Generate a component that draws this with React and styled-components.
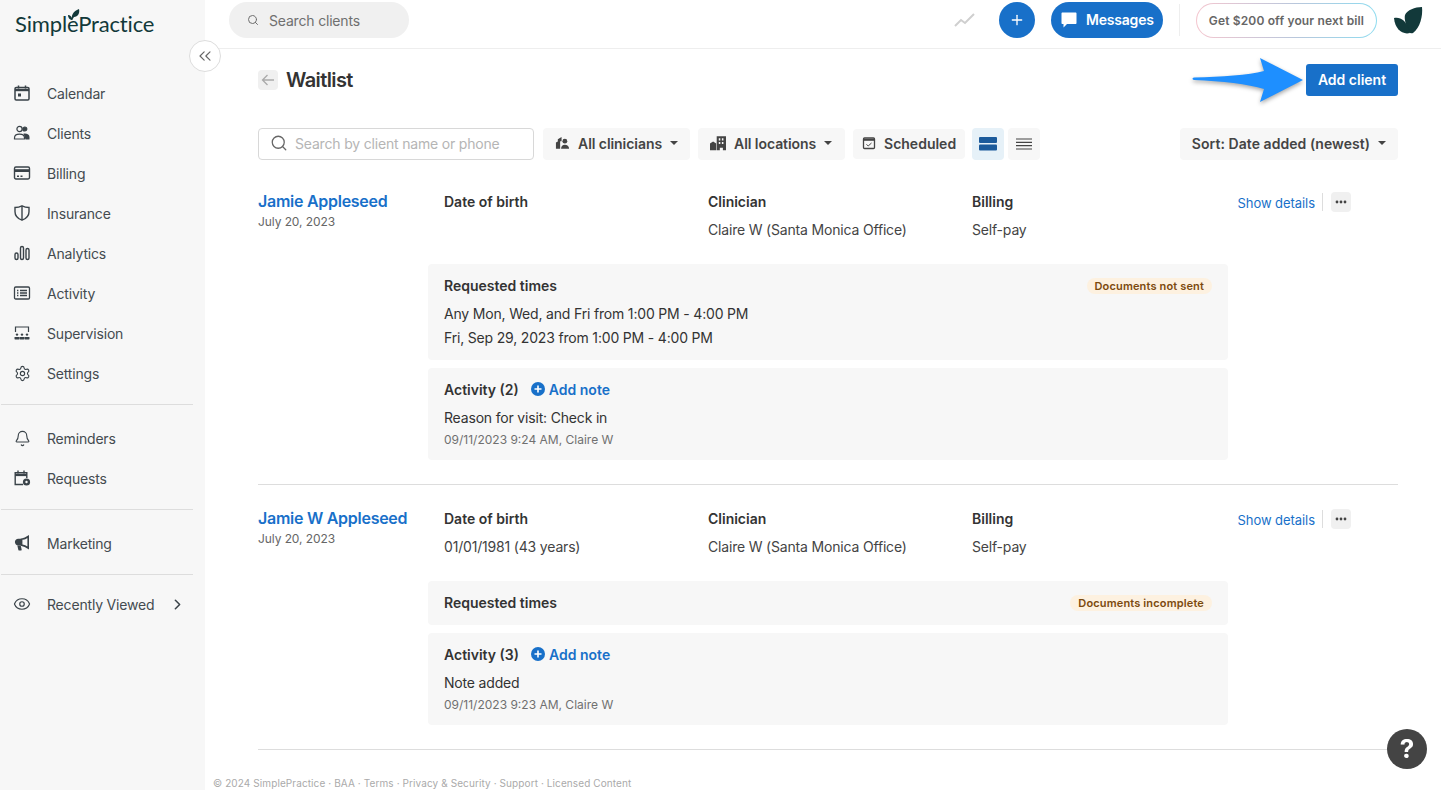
import React from 'react';
import styled, { createGlobalStyle } from 'styled-components';
import { ChevronsLeft, ChevronRight, Search, Plus, Bell, Settings, Eye } from 'lucide-react';

const GlobalStyle = createGlobalStyle`
  html, body {
    margin: 0;
    padding: 0;
    height: 100%;
    overflow: hidden;
    background: #fff;
    font-family: Inter, "Liberation Sans", sans-serif;
    color: #333;
  }
  * { box-sizing: border-box; }
`;

const CalendarIcon = () => (
  <svg width="18" height="18" viewBox="0 0 18 18" fill="none" stroke="currentColor" strokeWidth="1.5">
    <rect x="2" y="3.5" width="14" height="12.5" rx="1.2" />
    <path d="M2 6h14" strokeWidth="2.4" />
    <path d="M5.5 1.5v3M12.5 1.5v3" />
    <rect x="5" y="9.5" width="3" height="3" fill="currentColor" stroke="none" />
  </svg>
);

const ClientsIcon = () => (
  <svg width="18" height="18" viewBox="0 0 18 18" fill="none" stroke="currentColor" strokeWidth="1.2">
    <circle cx="6.5" cy="5" r="2.6" />
    <circle cx="11.8" cy="5" r="2" fill="currentColor" />
    <path d="M1.5 15v-1c0-2.400 2-3.800 5-3.800s5 1.400 5 3.800v1z" />
    <path d="M10.500 9.500c3.300-.5 6 .8 6 3.500v2.600h-4z" fill="currentColor" stroke="none" />
  </svg>
);

const BillingIcon = () => (
  <svg width="18" height="18" viewBox="0 0 18 18" fill="none" stroke="currentColor" strokeWidth="1.4">
    <rect x="1.5" y="3" width="15" height="12" rx="1.4" />
    <rect x="1.5" y="5.2" width="15" height="2.8" fill="currentColor" stroke="none" />
    <path d="M4 12.2h2M7.5 12.2h2" />
  </svg>
);

const ShieldIcon = () => (
  <svg width="18" height="18" viewBox="0 0 18 18" fill="none" stroke="currentColor" strokeWidth="1.4">
    <path d="M9 1.8c2.2 1.2 4.6 1.7 7 1.7v4.2c0 3.8-2.6 6.8-7 8.5-4.4-1.7-7-4.7-7-8.5V3.5c2.4 0 4.8-.5 7-1.7z" />
    <path d="M9 2v14" />
  </svg>
);

const AnalyticsIcon = () => (
  <svg width="18" height="18" viewBox="0 0 18 18" fill="none" stroke="currentColor" strokeWidth="1.4">
    <rect x="2" y="9" width="3" height="6.5" rx="1.5" />
    <rect x="7.5" y="2.5" width="3" height="13" rx="1.5" />
    <rect x="13" y="4.5" width="3" height="11" rx="1.5" />
  </svg>
);

const ActivityIcon = () => (
  <svg width="18" height="18" viewBox="0 0 18 18" fill="none" stroke="currentColor" strokeWidth="1.3">
    <rect x="1.5" y="3" width="15" height="12" rx="1.2" />
    <path d="M4 6.5h1.4M4 9h1.4M4 11.5h1.4M7 6.5h7M7 9h7M7 11.5h7" />
  </svg>
);

const SupervisionIcon = () => (
  <svg width="18" height="18" viewBox="0 0 18 18" fill="none" stroke="currentColor" strokeWidth="1.2">
    <path d="M2.5 8V3h13v5" />
    <g fill="currentColor" stroke="none">
      <circle cx="4" cy="10.6" r="1.2" />
      <circle cx="9" cy="10.6" r="1.2" />
      <circle cx="14" cy="10.6" r="1.2" />
      <rect x="1.5" y="13" width="5" height="2.4" rx=".6" />
      <rect x="6.6" y="13" width="4.8" height="2.4" rx=".6" />
      <rect x="11.5" y="13" width="5" height="2.4" rx=".6" />
    </g>
  </svg>
);

const RequestsIcon = () => (
  <svg width="18" height="18" viewBox="0 0 18 18" fill="none" stroke="currentColor" strokeWidth="1.4">
    <path d="M10 15.5H2.2V3.8h11.6V9" />
    <path d="M2 6h12" strokeWidth="2.2" />
    <path d="M5 1.5v3M11 1.5v3" />
    <circle cx="13.5" cy="13" r="3.6" fill="currentColor" stroke="none" />
    <circle cx="13.5" cy="13" r="1.2" fill="#f7f7f7" stroke="none" />
  </svg>
);

const MarketingIcon = () => (
  <svg width="18" height="18" viewBox="0 0 18 18" fill="currentColor">
    <path d="M15.200 2.500v11.500c-2-1.500-4-2.500-6.600-2.900V5.300c2.600-.4 4.700-1.400 6.600-2.800z" fill="none" stroke="currentColor" strokeWidth="1.6" />
    <path d="M8.600 4.700v6.800H5.300c-1.900 0-3.400-1.500-3.400-3.400s1.500-3.400 3.400-3.400z" />
    <path d="M4.300 11.500h3.400l1 4.200c.1.500-.2.800-.7.800H6.200c-.4 0-.7-.2-.8-.6z" />
  </svg>
);

const ClinicianIcon = () => (
  <svg width="15" height="16" viewBox="0 0 16 16" fill="currentColor">
    <path d="M1 14V7.500l2-1V4l4-2.500V6H5.500v8z" />
    <circle cx="10.500" cy="6" r="2.600" />
    <path d="M6.500 14c0-2.600 1.600-4.200 4-4.200s4.500 1.600 4.500 4.200z" />
  </svg>
);

const LocationsIcon = () => (
  <svg width="16" height="16" viewBox="1 1.500 15.500 15" fill="currentColor">
    <path d="M1 16V9.500L4 7.500l3 2V16z" />
    <path d="M7.500 16V2.500h9V16h-3v-2.500h-3V16zM9.500 4.500v2h1.500v-2zm3 0v2H14v-2zm-3 3.500v2h1.500V8zm3 0v2H14V8z" fillRule="evenodd" />
  </svg>
);

const ScheduledIcon = () => (
  <svg width="14" height="14" viewBox="0 0 14 14" fill="none" stroke="currentColor" strokeWidth="1.300">
    <rect x="1.500" y="2" width="11" height="10.500" rx="1" />
    <path d="M1.500 3.800h11" strokeWidth="2" />
    <path d="M4.500 8.300l1.700 1.700 3.300-3" strokeWidth="1" />
  </svg>
);

const TrendIcon = () => (
  <svg width="22" height="16" viewBox="0 0 22 16" fill="none" stroke="#cfcfcf" strokeWidth="2">
    <path d="M1 14l6-6 4 3 9-9" />
  </svg>
);

const BubbleIcon = () => (
  <svg width="18" height="18" viewBox="0 0 18 18" fill="#fff">
    <path d="M2.500 1.500h13c.6 0 1 .4 1 1v9.500c0 .6-.4 1-1 1H7l-3.500 3.500V13h-1c-.6 0-1-.4-1-1V2.500c0-.6.400-1 1-1z" />
  </svg>
);

const navTop = [
  ['Calendar', <CalendarIcon />],
  ['Clients', <ClientsIcon />],
  ['Billing', <BillingIcon />],
  ['Insurance', <ShieldIcon />],
  ['Analytics', <AnalyticsIcon />],
  ['Activity', <ActivityIcon />],
  ['Supervision', <SupervisionIcon />],
  ['Settings', <Settings size={17} strokeWidth={1.6} />],
];

const clients = [
  {
    name: 'Jamie Appleseed',
    dob: '',
    badge: 'Documents not sent',
    times: ['Any Mon, Wed, and Fri from 1:00 PM - 4:00 PM', 'Fri, Sep 29, 2023 from 1:00 PM - 4:00 PM'],
    activity: 2,
    note: 'Reason for visit: Check in',
    stamp: '09/11/2023 9:24 AM, Claire W',
  },
  {
    name: 'Jamie W Appleseed',
    dob: '01/01/1981 (43 years)',
    badge: 'Documents incomplete',
    times: [],
    activity: 3,
    note: 'Note added',
    stamp: '09/11/2023 9:23 AM, Claire W',
  },
];

const App = () => {
  return (
    <Page>
      <GlobalStyle />
      <Sidebar>
        <LogoRow>
          <LogoText>SimplePractice</LogoText>
          <LogoLeaf width="14" height="14" viewBox="0 0 14 14">
            <path d="M5 12C4 8 6 3 12 1c1 4-1 8-5 8z" fill="#12393a" />
            <path d="M1 7c2 0 4 1.500 4.500 5C3 12 1 10 1 7z" fill="#12393a" />
          </LogoLeaf>
        </LogoRow>
        <CollapseButton>
          <ChevronsLeft size={20} strokeWidth={1.4} />
        </CollapseButton>
        <NavGroup $first>
          {navTop.map(([label, icon]) => (
            <NavItem key={label}>
              <NavIcon>{icon}</NavIcon>
              {label}
            </NavItem>
          ))}
        </NavGroup>
        <NavGroup>
          <NavItem>
            <NavIcon>
              <Bell size={17} strokeWidth={1.6} />
            </NavIcon>
            Reminders
          </NavItem>
          <NavItem>
            <NavIcon>
              <RequestsIcon />
            </NavIcon>
            Requests
          </NavItem>
        </NavGroup>
        <NavGroup>
          <NavItem>
            <NavIcon>
              <MarketingIcon />
            </NavIcon>
            Marketing
          </NavItem>
        </NavGroup>
        <NavGroup $last>
          <NavItem>
            <NavIcon>
              <Eye size={18} strokeWidth={1.6} />
            </NavIcon>
            Recently Viewed
            <NavChevron>
              <ChevronRight size={17} strokeWidth={2.2} />
            </NavChevron>
          </NavItem>
        </NavGroup>
      </Sidebar>

      <Column>
        <TopBar>
          <SearchPill>
            <Search size={12} strokeWidth={2} />
            Search clients
          </SearchPill>
          <TopActions>
            <TrendSlot>
              <TrendIcon />
            </TrendSlot>
            <RoundButton>
              <Plus size={16} strokeWidth={2} />
            </RoundButton>
            <MessagesButton>
              <BubbleIcon />
              Messages
            </MessagesButton>
            <TopSeparator />
            <PromoButton>Get $200 off your next bill</PromoButton>
            <svg width="30" height="30" viewBox="0 0 30 30">
              <path d="M12 10C14 5 22 2 29 2c1 9-2 21-9 26-3 1-5-1-6-5-1-4-3-9-2-13z" fill="#12393a" />
              <path d="M1 13c6-1 12 1 16 15C9 30 2 24 1 13z" fill="#12393a" />
            </svg>
          </TopActions>
        </TopBar>

        <Content>
          <Header>
            <HeaderLeft>
              <BackButton>
                <svg width="14" height="14" viewBox="0 0 14 14" fill="none" stroke="#aaa" strokeWidth="1.300">
                  <path d="M13 7H1.500M6.500 2L1.500 7l5 5" />
                </svg>
              </BackButton>
              <Title>Waitlist</Title>
            </HeaderLeft>
            <AddClient>
              Add client
              <CalloutArrow width="114" height="50" viewBox="0 0 114 50">
                <path
                  d="M2 21.500C30 21 56 19 72 15L68 2l43 22-43 22 4-13C56 28 30 25 2 24c-2-.5-2-2 0-2.500z"
                  fill="#1e8fff"
                />
              </CalloutArrow>
            </AddClient>
          </Header>

          <Toolbar>
            <SearchField>
              <Search size={18} strokeWidth={1.7} color="#666" />
              <span>Search by client name or phone</span>
            </SearchField>
            <ToolButton>
              <ClinicianIcon />
              All clinicians
              <Caret />
            </ToolButton>
            <ToolButton>
              <LocationsIcon />
              All locations
              <Caret />
            </ToolButton>
            <ScheduledButton>
              <ScheduledIcon />
              Scheduled
            </ScheduledButton>
            <ViewToggle $active>
              <svg width="18" height="14" viewBox="0 0 18 14" fill="#1b5a9b">
                <rect y="0" width="18" height="6" rx="1" />
                <rect y="7.500" width="18" height="6" rx="1" />
              </svg>
            </ViewToggle>
            <ViewToggle>
              <svg width="16" height="12" viewBox="0 0 16 12" stroke="#444" strokeWidth="1.200">
                <path d="M0 1h16M0 4.300h16M0 7.700h16M0 11h16" />
              </svg>
            </ViewToggle>
            <SortButton>
              Sort: Date added (newest)
              <Caret />
            </SortButton>
          </Toolbar>

          {clients.map(client => (
            <ClientRow key={client.name}>
              <ClientInfo>
                <ClientName>{client.name}</ClientName>
                <AddedDate>July 20, 2023</AddedDate>
              </ClientInfo>
              <ClientBody>
                <Details>
                  <Detail>
                    <DetailLabel>Date of birth</DetailLabel>
                    <DetailValue>{client.dob}</DetailValue>
                  </Detail>
                  <Detail>
                    <DetailLabel>Clinician</DetailLabel>
                    <DetailValue>Claire W (Santa Monica Office)</DetailValue>
                  </Detail>
                  <Detail>
                    <DetailLabel>Billing</DetailLabel>
                    <DetailValue>Self-pay</DetailValue>
                  </Detail>
                </Details>
                <Panel>
                  <PanelHead>
                    <PanelTitle>Requested times</PanelTitle>
                    <Badge>{client.badge}</Badge>
                  </PanelHead>
                  {client.times.length > 0 && (
                    <TimesList>
                      {client.times.map(time => (
                        <TimeLine key={time}>{time}</TimeLine>
                      ))}
                    </TimesList>
                  )}
                </Panel>
                <Panel>
                  <PanelHeadLeft>
                    <PanelTitle>Activity ({client.activity})</PanelTitle>
                    <AddNote>
                      <svg width="14" height="14" viewBox="0 0 14 14">
                        <circle cx="7" cy="7" r="7" fill="#1870c9" />
                        <path d="M7 3.500v7M3.500 7h7" stroke="#fff" strokeWidth="1.600" />
                      </svg>
                      Add note
                    </AddNote>
                  </PanelHeadLeft>
                  <NoteText>{client.note}</NoteText>
                  <NoteStamp>{client.stamp}</NoteStamp>
                </Panel>
              </ClientBody>
              <RowActions>
                <ShowDetails>Show details</ShowDetails>
                <MoreButton>
                  <svg width="12" height="4" viewBox="0 0 12 4" fill="#444">
                    <circle cx="2" cy="2" r="1.400" />
                    <circle cx="6" cy="2" r="1.400" />
                    <circle cx="10" cy="2" r="1.400" />
                  </svg>
                </MoreButton>
              </RowActions>
            </ClientRow>
          ))}
        </Content>

        <Footer>© 2024 SimplePractice · BAA · Terms · Privacy &amp; Security · Support · Licensed Content</Footer>
      </Column>

      <HelpButton>?</HelpButton>
    </Page>
  );
};

const Page = styled.div`
  display: flex;
  height: 100vh;
  overflow: hidden;
`;

const Sidebar = styled.aside`
  position: relative;
  flex: 0 0 205px;
  background: #f7f7f7;
`;

const LogoRow = styled.div`
  position: relative;
  height: 74px;
  padding: 9px 0 0 15px;
`;

const LogoText = styled.div`
  font-family: Lato, sans-serif;
  font-size: 22px;
  line-height: 30px;
  letter-spacing: -0.15px;
  color: #12393a;
`;

const LogoLeaf = styled.svg`
  position: absolute;
  top: 8px;
  left: 67px;
`;

const CollapseButton = styled.button`
  position: absolute;
  top: 40px;
  right: -16px;
  z-index: 2;
  display: flex;
  align-items: center;
  justify-content: center;
  width: 32px;
  height: 32px;
  padding: 0;
  border: 1px solid #ddd;
  border-radius: 50%;
  background: #fff;
  color: #666;
`;

const NavGroup = styled.nav`
  margin: 0 12px 0 1px;
  padding: ${props => (props.$first ? '0 0 10px' : props.$last ? '10px 0 0' : '14px 0 10px')};
  border-bottom: ${props => (props.$last ? 'none' : '1px solid #ddd')};
`;

const NavItem = styled.div`
  display: flex;
  align-items: center;
  height: 40px;
  padding: 0 0 2px 12px;
  font-size: 14px;
  letter-spacing: -0.18px;
  color: #444b50;
`;

const NavIcon = styled.span`
  display: flex;
  align-items: center;
  justify-content: center;
  flex: 0 0 18px;
  height: 18px;
  margin-right: 16px;
  color: #3a4349;
`;

const NavChevron = styled.span`
  display: flex;
  margin-left: 15px;
  color: #3a4349;
`;

const Column = styled.div`
  flex: 1;
  min-width: 0;
  display: flex;
  flex-direction: column;
`;

const TopBar = styled.header`
  display: flex;
  align-items: flex-start;
  height: 49px;
  padding: 2px 18px 0 24px;
  border-bottom: 1px solid #eee;
`;

const SearchPill = styled.div`
  display: flex;
  align-items: center;
  gap: 10px;
  width: 180px;
  height: 36px;
  padding-left: 18px;
  border-radius: 18px;
  background: #f0f0f0;
  font-size: 14px;
  letter-spacing: -0.18px;
  color: #6f6f6f;
`;

const TopActions = styled.div`
  display: flex;
  align-items: center;
  height: 36px;
  margin-left: auto;
`;

const TrendSlot = styled.span`
  display: flex;
  margin-right: 23px;
`;

const RoundButton = styled.button`
  display: flex;
  align-items: center;
  justify-content: center;
  width: 36px;
  height: 36px;
  padding: 0;
  border: 0;
  border-radius: 50%;
  background: #1870c9;
  color: #fff;
`;

const MessagesButton = styled.button`
  display: flex;
  align-items: center;
  gap: 8px;
  width: 112px;
  height: 36px;
  margin-left: 16px;
  padding: 0 0 1px 9px;
  border: 0;
  border-radius: 18px;
  background: #1870c9;
  color: #fff;
  font-family: inherit;
  font-size: 14px;
  font-weight: 600;
  letter-spacing: -0.2px;
`;

const TopSeparator = styled.span`
  width: 1px;
  height: 32px;
  margin: 0 16px 0 16px;
  background: #eee;
`;

const PromoButton = styled.button`
  width: 181px;
  height: 35px;
  margin-right: 16px;
  padding: 0;
  border: 1px solid transparent;
  border-radius: 18px;
  background: linear-gradient(#fff, #fff) padding-box, linear-gradient(90deg, #f5c6cf, #b9c7dc 55%, #8fdcf0) border-box;
  color: #666;
  font-family: inherit;
  font-size: 12px;
  font-weight: 600;
  letter-spacing: 0.15px;
`;

const Content = styled.main`
  flex: 1;
  padding: 15px 43px 0 53px;
`;

const Header = styled.div`
  display: flex;
  align-items: center;
  justify-content: space-between;
  height: 32px;
`;

const HeaderLeft = styled.div`
  display: flex;
  align-items: center;
  gap: 9px;
`;

const BackButton = styled.span`
  display: flex;
  align-items: center;
  justify-content: center;
  width: 20px;
  height: 20px;
  border-radius: 4px;
  background: #f0f0f0;
`;

const Title = styled.h1`
  margin: 0 0 0 -1px;
  font-size: 20px;
  font-weight: 600;
  letter-spacing: -0.6px;
  color: #333;
`;

const AddClient = styled.button`
  position: relative;
  width: 92px;
  height: 32px;
  padding: 0 0 2px;
  border: 0;
  border-radius: 3px;
  background: #1870c9;
  color: #fff;
  font-family: inherit;
  font-size: 14px;
  font-weight: 600;
`;

const CalloutArrow = styled.svg`
  position: absolute;
  top: -8px;
  right: 92px;
  filter: drop-shadow(0 2px 2px rgba(0, 0, 0, 0.35));
`;

const Toolbar = styled.div`
  display: flex;
  align-items: center;
  margin-top: 32px;
  height: 32px;
`;

const SearchField = styled.div`
  display: flex;
  align-items: center;
  gap: 7px;
  width: 276px;
  height: 32px;
  margin-right: 9px;
  padding: 0 0 2px 11px;
  border: 1px solid #d8d8d8;
  border-radius: 4px;
  background: #fff;
  font-size: 14px;
  letter-spacing: -0.18px;
  color: #b5b5b5;
`;

const ToolButton = styled.button`
  display: flex;
  align-items: center;
  gap: 8px;
  min-width: 147px;
  height: 32px;
  margin-right: 8px;
  padding: 0 12px 2px;
  border: 0;
  border-radius: 4px;
  background: #f7f7f7;
  color: #444;
  font-family: inherit;
  font-size: 14px;
  font-weight: 600;
  letter-spacing: -0.06px;
`;

const ScheduledButton = styled(ToolButton)`
  min-width: 0;
  width: 112px;
  height: 30px;
  margin-right: 7px;
  padding: 0 0 2px 9px;
  letter-spacing: 0;
`;

const SortButton = styled(ToolButton)`
  margin: 0 0 0 auto;
  letter-spacing: 0.05px;
`;

const Caret = styled.span`
  width: 0;
  height: 0;
  border-top: 4px solid #444;
  border-left: 4px solid transparent;
  border-right: 4px solid transparent;
`;

const ViewToggle = styled.span`
  display: flex;
  align-items: center;
  justify-content: center;
  width: 32px;
  height: 32px;
  margin-right: 4px;
  border-radius: 4px;
  background: ${props => (props.$active ? '#e6f1f8' : '#f7f7f7')};
`;

const ClientRow = styled.section`
  display: flex;
  align-items: flex-start;
  padding: 24px 0;
  border-bottom: 1px solid #ddd;

  &:first-of-type {
    margin-top: 8px;
  }
`;

const ClientInfo = styled.div`
  flex: 0 0 170px;
`;

const ClientName = styled.div`
  margin-top: -1px;
  font-size: 16px;
  line-height: 20px;
  font-weight: 600;
  letter-spacing: -0.27px;
  color: #1870c9;
`;

const AddedDate = styled.div`
  margin-top: 2px;
  font-size: 12px;
  line-height: 18px;
  letter-spacing: -0.08px;
  color: #666;
`;

const ClientBody = styled.div`
  flex: 0 0 800px;
`;

const Details = styled.div`
  display: grid;
  grid-template-columns: 264px 264px 1fr;
  height: 72px;
  padding-left: 16px;
`;

const Detail = styled.div`
  display: flex;
  flex-direction: column;
  gap: 8px;
`;

const DetailLabel = styled.div`
  min-height: 20px;
  font-size: 14px;
  line-height: 20px;
  font-weight: 600;
  color: #333;
`;

const DetailValue = styled.div`
  font-size: 14px;
  line-height: 20px;
  letter-spacing: -0.18px;
  color: #444;
`;

const Panel = styled.div`
  margin-bottom: 8px;
  padding: 12px 16px;
  border-radius: 4px;
  background: #f7f7f7;

  &:last-child {
    margin-bottom: 0;
  }
`;

const PanelHead = styled.div`
  display: flex;
  align-items: center;
  justify-content: space-between;
  height: 20px;
`;

const PanelHeadLeft = styled(PanelHead)`
  justify-content: flex-start;
  gap: 12px;
`;

const PanelTitle = styled.div`
  font-size: 14px;
  line-height: 20px;
  font-weight: 600;
  color: #333;
`;

const Badge = styled.span`
  height: 16px;
  padding: 0 8px;
  border-radius: 8px;
  background: #fdf1e0;
  font-size: 11px;
  line-height: 16px;
  font-weight: 600;
  letter-spacing: 0.15px;
  color: #7c4a0e;
`;

const TimesList = styled.div`
  margin: 6px 0 -2px;
`;

const TimeLine = styled.div`
  font-size: 14px;
  line-height: 24px;
  letter-spacing: -0.18px;
  color: #333;
`;

const AddNote = styled.span`
  display: flex;
  align-items: center;
  gap: 4px;
  margin-top: -2px;
  font-size: 14px;
  font-weight: 600;
  color: #1870c9;
`;

const NoteText = styled.div`
  margin-top: 8px;
  font-size: 14px;
  line-height: 20px;
  letter-spacing: -0.18px;
  color: #333;
`;

const NoteStamp = styled.div`
  margin-top: 3px;
  font-size: 12px;
  line-height: 17px;
  color: #707070;
`;

const RowActions = styled.div`
  display: flex;
  align-items: center;
  flex: 1;
  justify-content: flex-end;
  height: 20px;
  padding-right: 47px;
`;

const ShowDetails = styled.span`
  height: 18px;
  padding: 2px 7px 0 0;
  border-right: 1px solid #ddd;
  font-size: 13px;
  line-height: 17px;
  letter-spacing: -0.06px;
  color: #1870c9;
`;

const MoreButton = styled.span`
  display: flex;
  align-items: center;
  justify-content: center;
  width: 20px;
  height: 20px;
  margin-left: 8px;
  border-radius: 4px;
  background: #f0f0f0;
`;

const Footer = styled.footer`
  padding-left: 8px;
  font-size: 10px;
  line-height: 14px;
  letter-spacing: 0.1px;
  color: #aaa;
`;

const HelpButton = styled.button`
  position: fixed;
  right: 14px;
  bottom: 21px;
  width: 40px;
  height: 40px;
  padding: 0 0 2px;
  border: 0;
  border-radius: 50%;
  background: #444;
  color: #fff;
  font-family: Inter, sans-serif;
  font-size: 26px;
  font-weight: 700;
`;

export default App;
